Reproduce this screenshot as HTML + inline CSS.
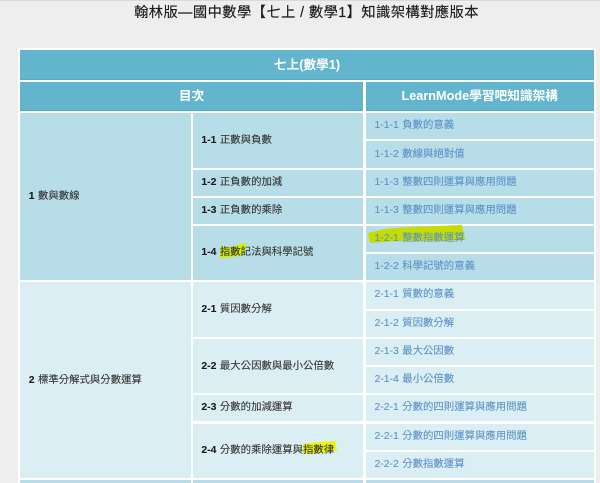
<!DOCTYPE html>
<html lang="zh-Hant">
<head>
<meta charset="utf-8">
<title>翰林版</title>
<style>
html,body{margin:0;padding:0;width:600px;height:483px;overflow:hidden;background:#eeeeee}
#p{position:absolute;left:0;top:0;width:600px;height:483px;overflow:hidden;background:#eeeeee;filter:blur(.35px);font-family:"Liberation Sans","Noto Sans CJK TC",sans-serif}
#p div{position:absolute;box-sizing:border-box;white-space:nowrap;z-index:0}
.topline{left:0;top:0;width:600px;height:1px;background:#d9d9d9}
.title{left:0;top:3px;width:613px;text-align:center;font-size:14.3px;line-height:20px;color:#1c1c1c;letter-spacing:.4px;-webkit-text-stroke:.15px #1c1c1c}
.wrap{left:18px;top:48px;width:578px;height:440px;background:#fff}
.h{background:#62b5cc;color:#fff;font-weight:bold;font-size:12.7px;text-align:center;border-bottom:1px solid #55abc4}
.d{background:#b6dde8}
.l{background:#dbeef4}
.c1,.c2,.c3{font-size:10.4px;word-spacing:.6px;-webkit-text-stroke:.1px currentColor}
.c1,.c2{color:#333;padding-left:8.7px}
.c1 b,.c2 b{color:#1a1a1a}
.c3{color:#5b93c9;padding-left:9px}
svg{position:absolute;z-index:-1;overflow:visible}
</style>
</head>
<body>
<div id="p">
<div class="topline"></div>
<div class="title">翰林版—國中數學【七上 / 數學1】知識架構對應版本</div>
<div class="wrap"></div>

<div class="h" style="left:20px;top:50px;width:574px;height:30px;line-height:30px">七上(數學1)</div>
<div class="h" style="left:20px;top:82px;width:343px;height:29px;line-height:29px">目次</div>
<div class="h" style="left:365.5px;top:82px;width:228.5px;height:29px;line-height:29px">LearnMode學習吧知識架構</div>

<div class="d c1" style="left:20px;top:113px;width:170.7px;height:167px;line-height:167px"><b>1</b> 數與數線</div>
<div class="l c1" style="left:20px;top:282px;width:170.7px;height:196px;line-height:197px"><b>2</b> 標準分解式與分數運算</div>
<div class="d" style="left:20px;top:480px;width:170.7px;height:6px"></div>

<div class="d c2" style="left:192.7px;top:113px;width:170.6px;height:55px;line-height:55px"><b>1-1</b> 正數與負數</div>
<div class="d c2" style="left:192.7px;top:170px;width:170.6px;height:26px;line-height:26px"><b>1-2</b> 正負數的加減</div>
<div class="d c2" style="left:192.7px;top:198px;width:170.6px;height:26px;line-height:26px"><b>1-3</b> 正負數的乘除</div>
<div class="d c2" style="left:192.7px;top:226px;width:170.6px;height:54px;line-height:54px"><svg width="600" height="483" viewBox="0 0 600 483" style="left:-192.7px;top:-226px"><polygon points="220,247 232,247 241,244 246,243 246,251 240,256 220,258" fill="#d4ec00"/></svg><b>1-4</b> 指數記法與科學記號</div>
<div class="l c2" style="left:192.7px;top:282px;width:170.6px;height:55px;line-height:55px"><b>2-1</b> 質因數分解</div>
<div class="l c2" style="left:192.7px;top:339px;width:170.6px;height:54px;line-height:55px"><b>2-2</b> 最大公因數與最小公倍數</div>
<div class="l c2" style="left:192.7px;top:395px;width:170.6px;height:26px;line-height:26px"><b>2-3</b> 分數的加減運算</div>
<div class="l c2" style="left:192.7px;top:423.5px;width:170.6px;height:54px;line-height:53px"><svg width="600" height="483" viewBox="0 0 600 483" style="left:-192.7px;top:-423.5px"><polygon points="303,444 320,442 335,441 337,450 330,452 303,454" fill="#eef500"/></svg><b>2-4</b> 分數的乘除運算與指數律</div>
<div class="d" style="left:192.7px;top:480px;width:170.6px;height:6px"></div>

<div class="d c3" style="left:365.5px;top:113px;width:228.5px;height:26px;line-height:26px">1-1-1 負數的意義</div>
<div class="d c3" style="left:365.5px;top:141px;width:228.5px;height:27px;line-height:27px">1-1-2 數線與絕對值</div>
<div class="d c3" style="left:365.5px;top:170px;width:228.5px;height:26px;line-height:26px">1-1-3 整數四則運算與應用問題</div>
<div class="d c3" style="left:365.5px;top:198px;width:228.5px;height:26px;line-height:26px">1-1-3 整數四則運算與應用問題</div>
<div class="d c3" style="left:365.5px;top:226px;width:228.5px;height:26px;line-height:26px"><svg width="600" height="483" viewBox="0 0 600 483" style="left:-365.5px;top:-226px"><polygon points="368,233 385,229 410,227 462,225 465,240 440,241 400,241 370,243" fill="#c5dc00"/></svg>1-2-1 整數指數運算</div>
<div class="d c3" style="left:365.5px;top:254px;width:228.5px;height:26px;line-height:26px">1-2-2 科學記號的意義</div>
<div class="l c3" style="left:365.5px;top:282px;width:228.5px;height:26.5px;line-height:26px">2-1-1 質數的意義</div>
<div class="l c3" style="left:365.5px;top:310.5px;width:228.5px;height:26.5px;line-height:26px">2-1-2 質因數分解</div>
<div class="l c3" style="left:365.5px;top:339px;width:228.5px;height:26px;line-height:26px">2-1-3 最大公因數</div>
<div class="l c3" style="left:365.5px;top:367px;width:228.5px;height:26px;line-height:26px">2-1-4 最小公倍數</div>
<div class="l c3" style="left:365.5px;top:395px;width:228.5px;height:26px;line-height:26px">2-2-1 分數的四則運算與應用問題</div>
<div class="l c3" style="left:365.5px;top:423.5px;width:228.5px;height:26.5px;line-height:26px">2-2-1 分數的四則運算與應用問題</div>
<div class="l c3" style="left:365.5px;top:452px;width:228.5px;height:26px;line-height:26px">2-2-2 分數指數運算</div>
<div class="d" style="left:365.5px;top:480px;width:228.5px;height:6px"></div>
</div>
</body>
</html>
